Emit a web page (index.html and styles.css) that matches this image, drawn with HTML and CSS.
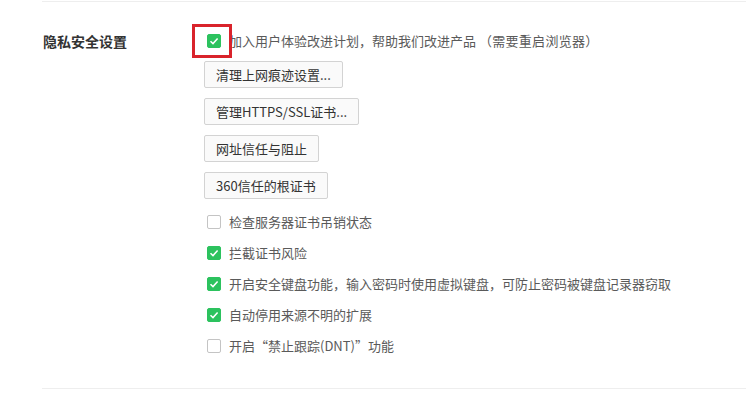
FILE: index.html
```html
<!DOCTYPE html>
<html lang="zh-CN">
<head>
  <meta charset="UTF-8">
  <title>隐私安全设置</title>
  <link rel="stylesheet" href="styles.css">
</head>
<body>
  <div class="section">
    <div class="section-title">隐私安全设置</div>
    <div class="section-body">
      <label class="check-row first">
        <span class="box checked"></span>
        <span class="check-text">加入用户体验改进计划，帮助我们改进产品 <span class="note">（需要重启浏览器）</span></span>
        <span class="highlight"></span>
      </label>

      <div class="btn-row"><button>清理上网痕迹设置...</button></div>
      <div class="btn-row"><button>管理HTTPS/SSL证书...</button></div>
      <div class="btn-row"><button>网址信任与阻止</button></div>
      <div class="btn-row"><button>360信任的根证书</button></div>

      <div class="check-list">
        <label class="check-row"><span class="box"></span><span class="check-text">检查服务器证书吊销状态</span></label>
        <label class="check-row"><span class="box checked"></span><span class="check-text">拦截证书风险</span></label>
        <label class="check-row"><span class="box checked"></span><span class="check-text">开启安全键盘功能，输入密码时使用虚拟键盘，可防止密码被键盘记录器窃取</span></label>
        <label class="check-row"><span class="box checked"></span><span class="check-text">自动停用来源不明的扩展</span></label>
        <label class="check-row"><span class="box"></span><span class="check-text">开启“禁止跟踪(DNT)”功能</span></label>
      </div>
    </div>
  </div>
</body>
</html>
```

FILE: styles.css
```css
body {
  margin: 0;
  padding-top: 1px;
  background: #fff;
  font-family: "Noto Sans CJK SC", "Noto Sans", sans-serif;
  font-size: 13px;
  color: #5a5a5a;
}
.section {
  margin-left: 42px;
  border-top: 1px solid #eeeeee;
  border-bottom: 1px solid #eeeeee;
  display: flex;
  height: 386px;
}
.section-title {
  width: 161px;
  padding-top: 29px;
  padding-left: 1px;
  font-size: 14px;
  font-weight: bold;
  color: #333;
  line-height: 20px;
}
.section-body {
  padding-top: 26px;
}
.check-row {
  position: relative;
  display: flex;
  align-items: center;
  height: 20px;
  padding-left: 3px;
  line-height: 20px;
}
.check-row.first {
  height: 26px;
}
.note {
  letter-spacing: 0.3px;
}
.box {
  width: 14px;
  height: 14px;
  box-sizing: border-box;
  border: 1px solid #c4c4c4;
  border-radius: 2px;
  background: #fff;
  margin-right: 8px;
  flex-shrink: 0;
}
.box.checked {
  border-color: #2cc25e;
  background: #2cc25e url("data:image/svg+xml,%3Csvg xmlns='http://www.w3.org/2000/svg' width='14' height='14'%3E%3Cpath d='M3.5 7.2 L6 9.6 L10.6 4.6' fill='none' stroke='%23fff' stroke-width='1.5'/%3E%3C/svg%3E") center / 14px 14px no-repeat;
}
.highlight {
  position: absolute;
  left: -12px;
  top: -4px;
  width: 40px;
  height: 34px;
  box-sizing: border-box;
  border: 3px solid #d9232b;
}
.btn-row {
  margin-top: 7px;
}
.btn-row + .btn-row {
  margin-top: 10px;
}
button {
  height: 27px;
  padding: 0 11px;
  border: 1px solid #d3d3d3;
  border-radius: 2px;
  background: #fafafa;
  font-family: inherit;
  font-size: 13px;
  color: #333;
  line-height: 25px;
}
.check-list {
  margin-top: 13px;
  display: flex;
  flex-direction: column;
  gap: 11px;
}
```
